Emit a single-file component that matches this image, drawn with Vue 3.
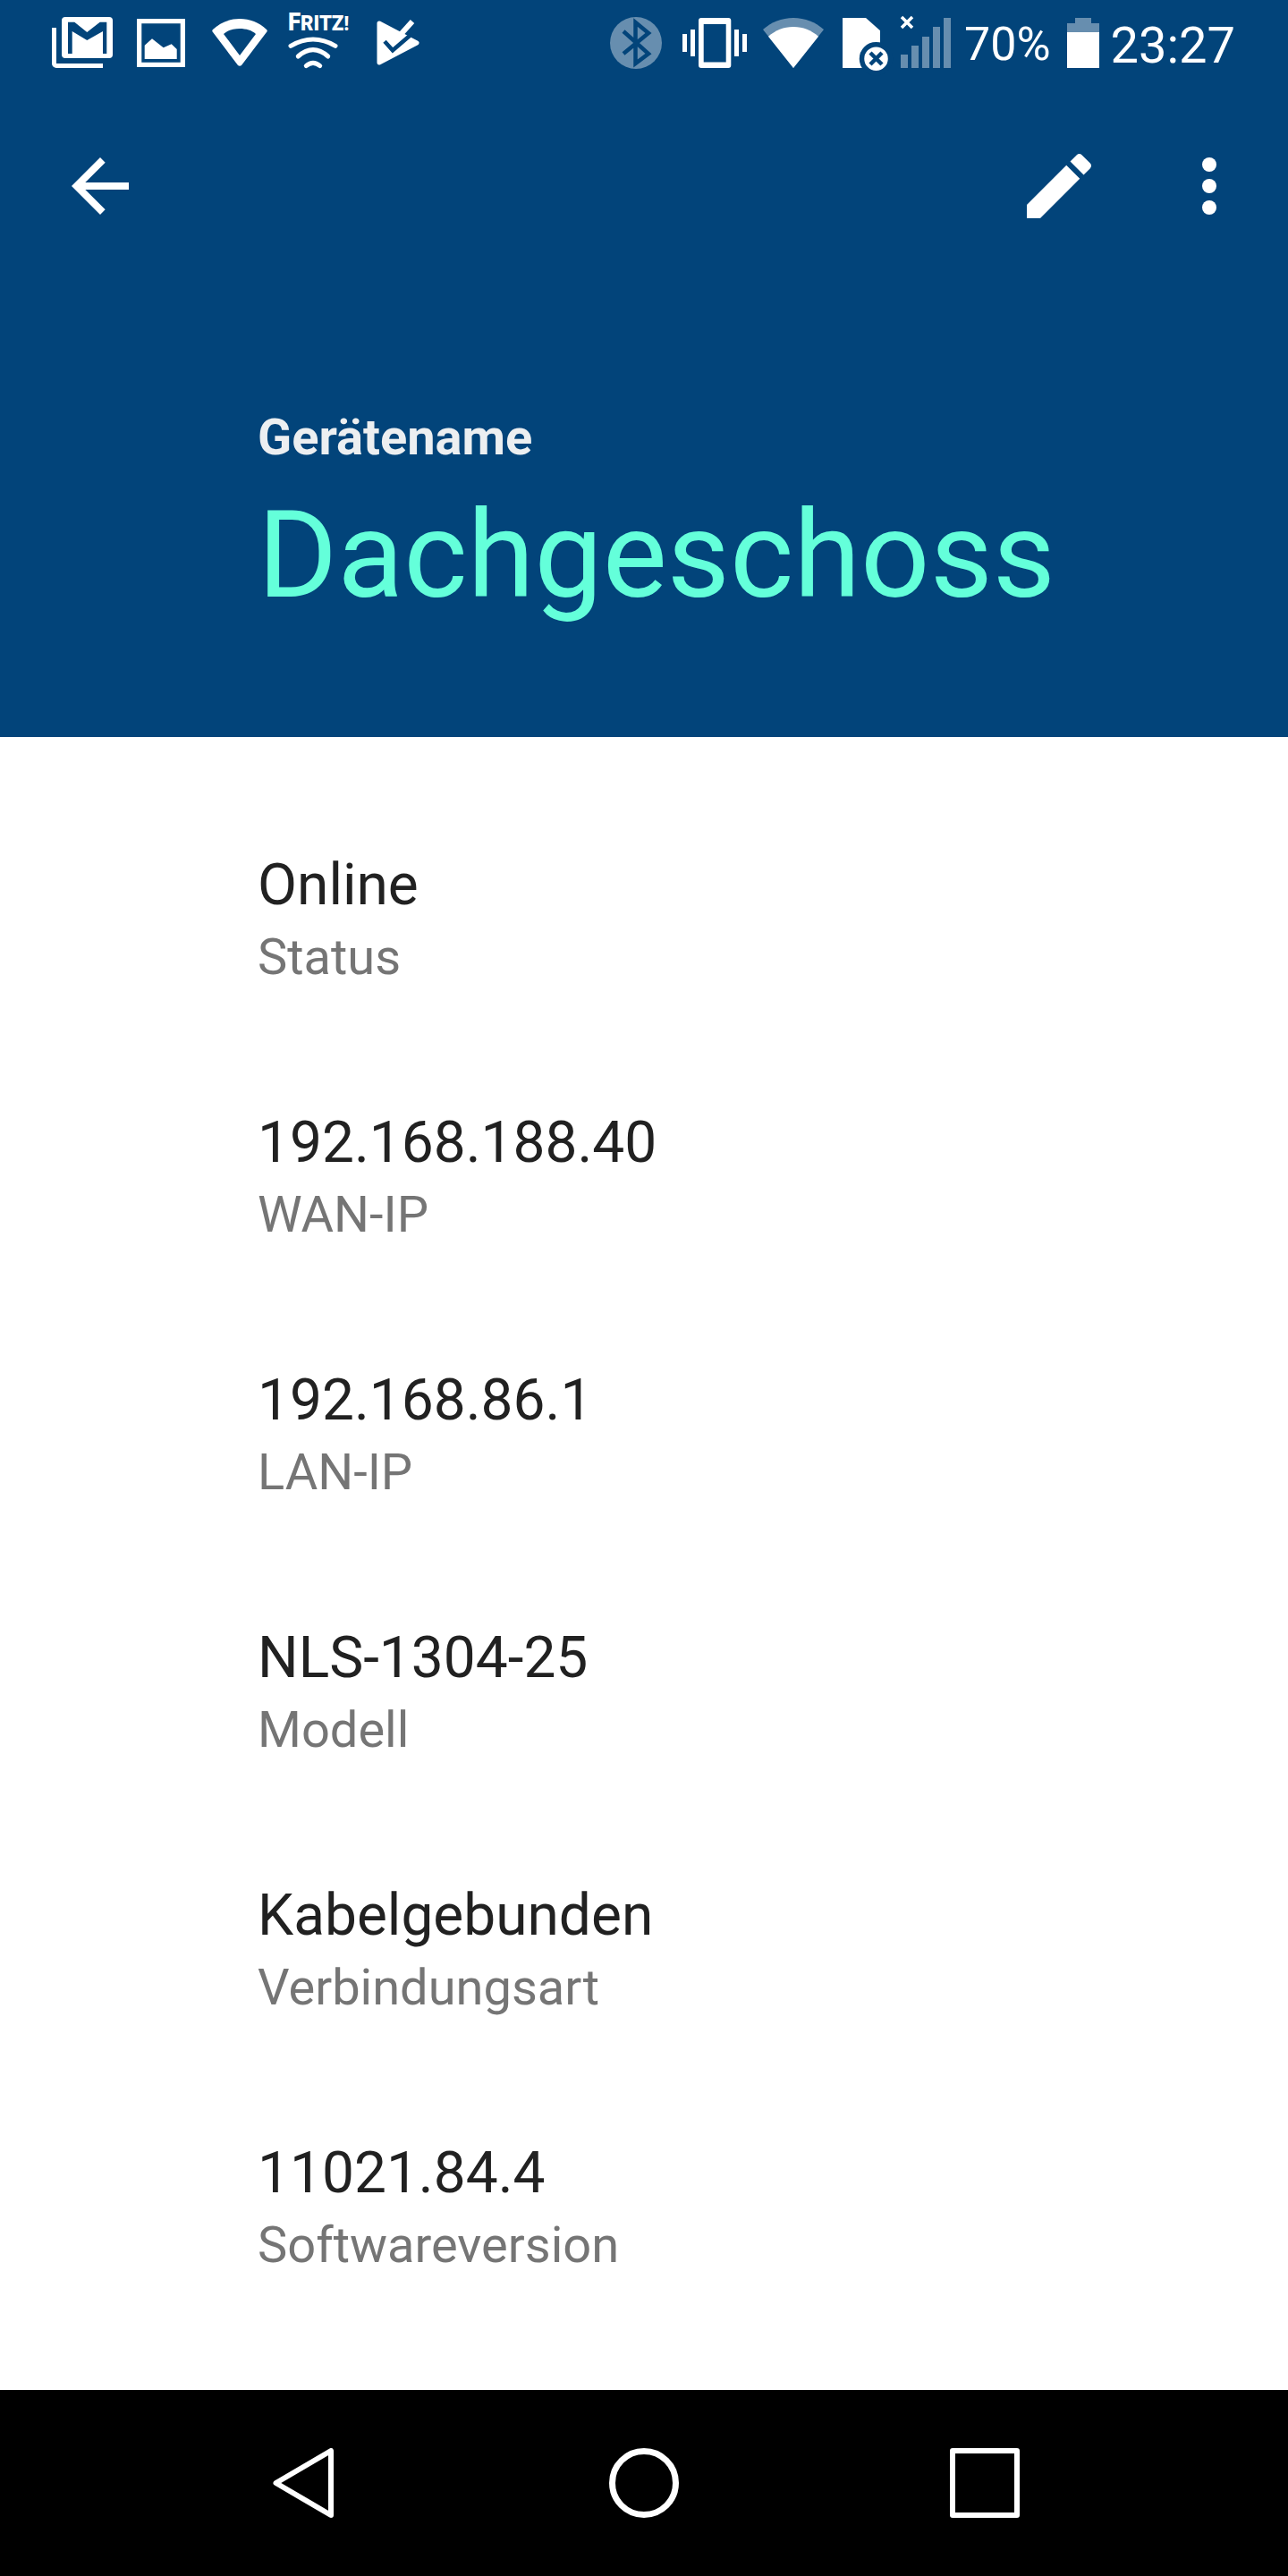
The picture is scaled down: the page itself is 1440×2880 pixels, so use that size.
<script setup>
const rows = [
  { value: 'Online', label: 'Status' },
  { value: '192.168.188.40', label: 'WAN-IP' },
  { value: '192.168.86.1', label: 'LAN-IP' },
  { value: 'NLS-1304-25', label: 'Modell' },
  { value: 'Kabelgebunden', label: 'Verbindungsart' },
  { value: '11021.84.4', label: 'Softwareversion' },
]
</script>

<template>
  <div class="screen">
    <header class="header">
      <div class="status">
        <div class="status-left">
          <svg class="i-mail" viewBox="0 0 68 57" fill="#fff">
            <path d="M0 12h5v40h52v5H5a5 5 0 0 1-5-5z" />
            <rect x="11" y="0" width="57" height="46" rx="4" />
            <path fill="#02447a" d="M18 5.700h7.300l14 11.300 14.400-11.300h7.600V41H57V16L39.300 26 22.700 16v25H18z" />
          </svg>
          <svg class="i-img" viewBox="0 0 54 54">
            <path fill="#fff" fill-rule="evenodd" d="M0 0h54v54H0zM5.300 5.300v43.400h43.400V5.300z" />
            <path fill="#fff" d="M8.700 45V29.700L17 22.300l12.700 10 9-4 6 5.700V45z" />
          </svg>
          <svg class="i-wifi" viewBox="0 0 62 53">
            <path fill="#fff" fill-rule="evenodd" d="M31 0c11 0 22 4 30 12 1 1 1 2 0 3L33 52c-1 1-3 1-4 0L1 15c-1-1-1-2 0-3C9 4 20 0 31 0zM31 11c-7 0-14 2-18 6l18 24 18-24c-4-4-11-6-18-6z" />
          </svg>
          <svg class="i-fritz" viewBox="0 0 68 62">
            <text class="fritz-text" x="0" y="20" textLength="68" lengthAdjust="spacingAndGlyphs"><tspan font-size="28">F</tspan><tspan font-size="24">RITZ</tspan><tspan font-size="22">!</tspan></text>
            <g fill="none" stroke="#fff" stroke-width="5" stroke-linecap="round">
              <path d="M3 37.300Q28 22.700 53 37.300" />
              <path d="M11.300 49Q28 34.400 44.700 49" />
              <path d="M20.300 59.700Q28 53 35.700 59.700" />
            </g>
          </svg>
          <svg class="i-check" viewBox="0 0 49 52">
            <path fill="#fff" stroke="#fff" stroke-width="5" stroke-linejoin="round" d="M3 4l42 22L3 48z" />
            <path fill="none" stroke="#02447a" stroke-width="4.500" d="M9 24.300l9 10 19.300-16.600" />
            <path fill="none" stroke="#fff" stroke-width="6" d="M22 22 40 2" />
          </svg>
        </div>
        <div class="status-right">
          <svg class="i-bt" viewBox="0 0 58 58">
            <circle cx="29" cy="29" r="29" fill="#fff" fill-opacity=".4" />
            <path fill="none" stroke="#02447a" stroke-width="4.500" d="M15 16l28 25-14.500 11V6L43 18 15 41" />
          </svg>
          <svg class="i-vib" viewBox="0 0 72 56" fill="#fff">
            <path fill-rule="evenodd" d="M21 0h30.300a3 3 0 0 1 3 3v50a3 3 0 0 1-3 3H21a3 3 0 0 1-3-3V3a3 3 0 0 1 3-3zm2.700 7v42.500h25V7z" />
            <path d="M9 13h5v30H9zM0 18h5v20H0zM58 13h5v30h-5zM67 18h5v20h-5z" />
          </svg>
          <svg class="i-wifi2" viewBox="0 0 68 56">
            <path fill="#fff" fill-opacity=".4" d="M34 0c13 0 25 5 34 13L34 56 0 13C9 5 21 0 34 0z" />
            <path fill="#fff" d="M34 10c11 0 20 4 28 10.700L34 56 6 20.700C14 14 23 10 34 10z" />
          </svg>
          <svg class="i-sim" viewBox="0 0 54 66">
            <path fill="#fff" d="M0 2h26l16 14.300V58H0z" />
            <circle cx="37.500" cy="47.700" r="16" fill="#fff" stroke="#02447a" stroke-width="5.500" />
            <path stroke="#02447a" stroke-width="4.500" d="M31 41l13 13M44 41L31 54" />
          </svg>
          <svg class="i-sig" viewBox="0 -2 56 58">
            <g fill="#fff" fill-opacity=".4">
              <path d="M0 41h8v15H0zM12 31h8v25h-8zM24 21h8v35h-8zM36 10h8v46h-8zM48 0h8v56h-8z" />
            </g>
            <path stroke="#fff" stroke-width="3.500" d="M1 -1l12 12M13 -1L1 11" />
          </svg>
          <span class="pct">70%</span>
          <svg class="i-bat" viewBox="0 0 36 56">
            <path fill="#fff" fill-opacity=".4" d="M9 0h18v6h9v10H0V6h9z" />
            <path fill="#fff" d="M0 16h36v40H0z" />
          </svg>
          <span class="time">23:27</span>
        </div>
      </div>

      <div class="toolbar">
        <svg class="tool" viewBox="0 0 24 24" fill="#fff">
          <path d="M20 11H7.830l5.590-5.590L12 4l-8 8 8 8 1.410-1.410L7.830 13H20v-2z" />
        </svg>
        <div class="tool-actions">
          <svg class="tool" viewBox="0 0 24 24" fill="#fff">
            <path d="M3 17.250V21h3.750L17.810 9.940l-3.750-3.750L3 17.250zM20.710 7.040c.39-.39.39-1.020 0-1.410l-2.340-2.340c-.39-.39-1.020-.39-1.410 0l-1.830 1.830 3.750 3.750 1.830-1.830z" />
          </svg>
          <svg class="tool" viewBox="0 0 24 24" fill="#fff">
            <circle cx="12" cy="6" r="2" />
            <circle cx="12" cy="12" r="2" />
            <circle cx="12" cy="18" r="2" />
          </svg>
        </div>
      </div>

      <div class="title">
        <div class="title-label">Gerätename</div>
        <div class="title-value">Dachgeschoss</div>
      </div>
    </header>

    <main class="list">
      <div v-for="row in rows" :key="row.label" class="row">
        <div class="row-value">{{ row.value }}</div>
        <div class="row-label">{{ row.label }}</div>
      </div>
    </main>

    <nav class="nav">
      <svg class="nav-icon" viewBox="0 0 78 78" fill="none" stroke="#fff" stroke-width="6" stroke-linejoin="round">
        <path d="M8.500 39 70 3v72z" />
      </svg>
      <svg class="nav-icon" viewBox="0 0 78 78" fill="none" stroke="#fff" stroke-width="7">
        <circle cx="39" cy="39" r="35.500" />
      </svg>
      <svg class="nav-icon" viewBox="0 0 78 78" fill="none" stroke="#fff" stroke-width="6" stroke-linejoin="round">
        <rect x="3" y="3" width="72" height="72" />
      </svg>
    </nav>
  </div>
</template>

<style>
body {
  margin: 0;
  background: #fff;
}
</style>

<style scoped>
.screen {
  width: 1440px;
  height: 2880px;
  display: flex;
  flex-direction: column;
  font-family: Roboto, sans-serif;
  overflow: hidden;
}
.header {
  height: 824px;
  flex: none;
  background: #02447a;
}
.status {
  height: 96px;
  display: flex;
  justify-content: space-between;
  align-items: flex-start;
  padding: 0 59px 0 58px;
}
.status-left,
.status-right {
  display: flex;
  align-items: flex-start;
}
.status svg {
  display: block;
  flex: none;
  overflow: visible;
}
.i-mail { width: 68px; height: 57px; margin-top: 19px; }
.i-img { width: 54px; height: 54px; margin: 21px 0 0 27px; }
.i-wifi { width: 62px; height: 53px; margin: 21px 0 0 30px; }
.i-fritz { width: 68px; height: 62px; margin: 14px 0 0 23px; }
.fritz-text {
  font-family: Roboto, sans-serif;
  font-weight: 900;
  fill: #fff;
}
.i-check { width: 49px; height: 52px; margin: 22px 0 0 31px; }
.i-bt { width: 58px; height: 58px; margin-top: 19px; }
.i-vib { width: 72px; height: 56px; margin: 20px 0 0 23px; }
.i-wifi2 { width: 68px; height: 56px; margin: 20px 0 0 18px; }
.i-sim { width: 54px; height: 66px; margin: 18px 0 0 21px; }
.i-sig { width: 56px; height: 58px; margin: 18px 0 0 11px; }
.i-bat { width: 36px; height: 56px; margin: 20px 0 0 18px; }
.pct {
  font-size: 52px;
  line-height: 64px;
  color: #fff;
  margin: 18px 0 0 15px;
}
.time {
  font-size: 56px;
  line-height: 64px;
  color: #fff;
  margin: 19px 0 0 13px;
}

.toolbar {
  height: 224px;
  display: flex;
  justify-content: space-between;
  align-items: center;
  padding: 0 40px 0 64px;
}
.tool {
  width: 96px;
  height: 96px;
  display: block;
}
.tool-actions {
  display: flex;
  gap: 72px;
}
.title {
  padding: 137px 0 0 288px;
}
.title-label {
  font-size: 56px;
  font-weight: 700;
  line-height: 64px;
  color: #eceff1;
}
.title-value {
  font-size: 136px;
  line-height: 160px;
  color: #64ffda;
  margin-top: 20px;
}
.list {
  flex: 1;
  padding: 124px 0 0 288px;
  display: flex;
  flex-direction: column;
  gap: 128px;
}
.row-value {
  font-size: 64px;
  line-height: 84px;
  color: #212121;
}
.row-label {
  font-size: 56px;
  line-height: 76px;
  color: #757575;
}
.nav {
  height: 208px;
  flex: none;
  background: #000;
  display: grid;
  grid-template-columns: repeat(3, 381px);
  justify-content: center;
  justify-items: center;
  align-items: center;
}
.nav-icon {
  width: 78px;
  height: 78px;
  display: block;
}
</style>
